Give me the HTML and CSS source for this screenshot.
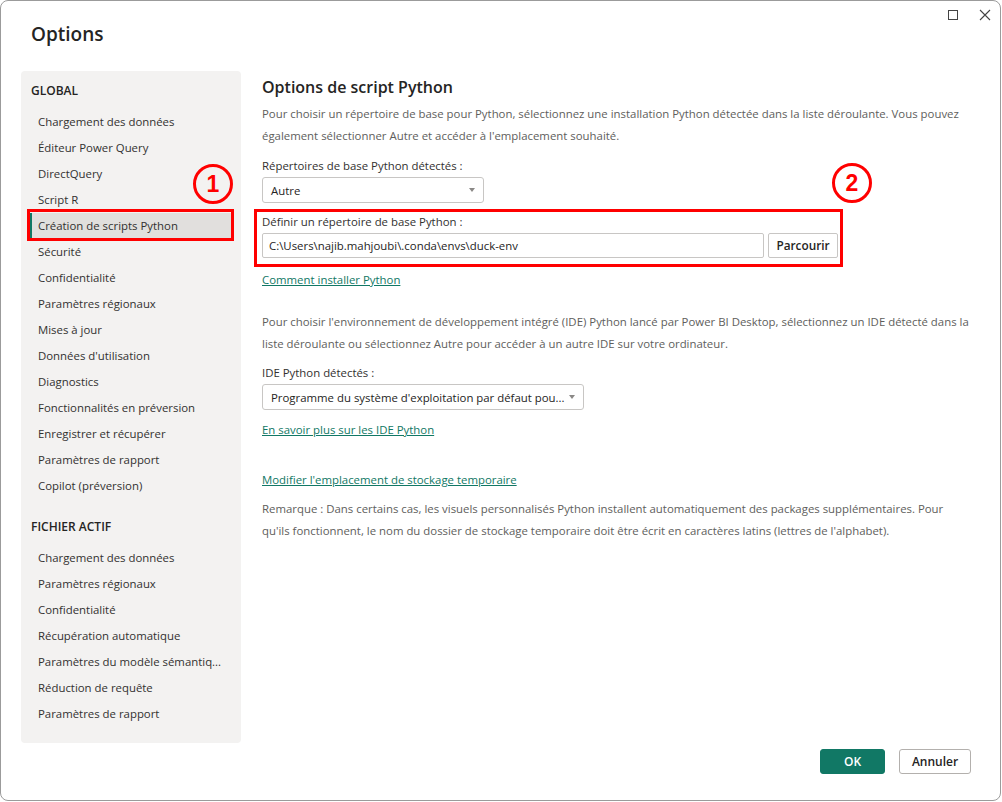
FILE: index.html
```html
<!DOCTYPE html>
<html lang="fr">
<head>
<meta charset="utf-8">
<title>Options</title>
<link rel="stylesheet" href="styles.css">
</head>
<body>
<div class="window">
  <header class="header">
    <h1 class="title">Options</h1>
    <div class="controls">
      <svg class="ctl" width="12" height="12" viewBox="0 0 12 12"><rect x="1.5" y="1.5" width="9" height="9" fill="none" stroke="#444" stroke-width="1"/></svg>
      <svg class="ctl" width="12" height="12" viewBox="0 0 12 12"><path d="M1 1 L11 11 M11 1 L1 11" stroke="#444" stroke-width="1.1" fill="none"/></svg>
    </div>
  </header>

  <div class="main">
    <nav class="sidebar">
      <div class="sec-title">GLOBAL</div>
      <ul class="nav">
        <li class="item">Chargement des données</li>
        <li class="item">Éditeur Power Query</li>
        <li class="item">DirectQuery</li>
        <li class="item">Script R</li>
        <li class="item selected">Création de scripts Python</li>
        <li class="item">Sécurité</li>
        <li class="item">Confidentialité</li>
        <li class="item">Paramètres régionaux</li>
        <li class="item">Mises à jour</li>
        <li class="item">Données d'utilisation</li>
        <li class="item">Diagnostics</li>
        <li class="item">Fonctionnalités en préversion</li>
        <li class="item">Enregistrer et récupérer</li>
        <li class="item">Paramètres de rapport</li>
        <li class="item">Copilot (préversion)</li>
      </ul>
      <div class="sec-title sec-second">FICHIER ACTIF</div>
      <ul class="nav">
        <li class="item">Chargement des données</li>
        <li class="item">Paramètres régionaux</li>
        <li class="item">Confidentialité</li>
        <li class="item">Récupération automatique</li>
        <li class="item">Paramètres du modèle sémantiq...</li>
        <li class="item">Réduction de requête</li>
        <li class="item">Paramètres de rapport</li>
      </ul>
    </nav>

    <section class="content">
      <h2 class="heading">Options de script Python</h2>
      <p class="para p1">Pour choisir un répertoire de base pour Python, sélectionnez une installation Python détectée dans la liste déroulante. Vous pouvez également sélectionner Autre et accéder à l'emplacement souhaité.</p>
      <div class="label l1">Répertoires de base Python détectés :</div>
      <div class="select s1"><span>Autre</span><span class="caret"></span></div>

      <div class="highlight">
        <div class="label">Définir un répertoire de base Python :</div>
        <div class="path-row">
          <div class="input">C:\Users\najib.mahjoubi\.conda\envs\duck-env</div>
          <div class="btn-browse">Parcourir</div>
        </div>
      </div>
      <a class="link lk1" href="#">Comment installer Python</a>

      <p class="para p2">Pour choisir l'environnement de développement intégré (IDE) Python lancé par Power BI Desktop, sélectionnez un IDE détecté dans la liste déroulante ou sélectionnez Autre pour accéder à un autre IDE sur votre ordinateur.</p>
      <div class="label l2">IDE Python détectés :</div>
      <div class="select s2"><span>Programme du système d'exploitation par défaut pou...</span><span class="caret"></span></div>
      <a class="link lk2" href="#">En savoir plus sur les IDE Python</a>
      <a class="link lk3" href="#">Modifier l'emplacement de stockage temporaire</a>
      <p class="para p3">Remarque : Dans certains cas, les visuels personnalisés Python installent automatiquement des packages supplémentaires. Pour qu'ils fonctionnent, le nom du dossier de stockage temporaire doit être écrit en caractères latins (lettres de l'alphabet).</p>
    </section>
  </div>

  <footer class="footer">
    <button class="btn btn-ok">OK</button>
    <button class="btn btn-cancel">Annuler</button>
  </footer>

  <div class="badge badge1">1</div>
  <div class="badge badge2">2</div>
</div>
</body>
</html>
```

FILE: styles.css
```css
* { box-sizing: border-box; }
html, body { margin: 0; padding: 0; background: #ffffff; }
body {
  font-family: "Open Sans", "Noto Sans", sans-serif;
  color: #252423;
  font-size: 11.4px;
}
.window {
  position: relative;
  width: 1001px;
  height: 801px;
  border: 1px solid #9b9b9b;
  border-radius: 8px;
  background: #fff;
  display: flex;
  flex-direction: column;
  overflow: hidden;
}
.header {
  height: 70px;
  display: flex;
  justify-content: space-between;
  align-items: flex-start;
  flex: none;
}
.title {
  margin: 0;
  padding: 19px 0 0 30px;
  font-size: 19px;
  line-height: 28px;
  font-weight: 600;
  color: #252423;
}
.controls {
  display: flex;
  gap: 20px;
  padding: 8px 9px 0 0;
}
.ctl { display: block; }

.main {
  height: 672px;
  display: flex;
  padding: 0 20px;
  flex: none;
}
.sidebar {
  width: 220px;
  flex: none;
  background: #f3f2f1;
  border-radius: 4px;
  padding: 10px 0 0 0;
}
.sec-title {
  padding-left: 10px;
  font-size: 12px;
  line-height: 20px;
  font-weight: 600;
  color: #252423;
}
.sec-second { margin-top: 18px; }
.nav {
  list-style: none;
  margin: 8px 0 0 0;
  padding: 0;
}
.item {
  position: relative;
  margin: 0 8px;
  padding-left: 9px;
  height: 26px;
  line-height: 26px;
  font-size: 11.4px;
  color: #323130;
  white-space: nowrap;
}
.item.selected {
  background: #e1dfdd;
  border-left: 3px solid #117865;
  padding-left: 6px;
}
.item.selected::after {
  content: "";
  position: absolute;
  left: -5px;
  right: -1px;
  top: -4px;
  bottom: -2px;
  border: 3px solid #ff0000;
}

.content {
  flex: 1;
  margin-left: 21px;
  padding-top: 4px;
  display: flex;
  flex-direction: column;
  align-items: flex-start;
}
.heading {
  margin: 0;
  font-size: 16px;
  line-height: 24px;
  font-weight: 600;
  color: #252423;
}
.para {
  margin: 0;
  font-size: 11.4px;
  line-height: 22px;
  color: #605e5c;
  max-width: 710px;
}
.p1 { margin-top: 4px; }
.p2 { margin-top: 21px; }
.p3 { margin-top: 8px; }
.label {
  font-size: 11.4px;
  line-height: 20px;
  color: #323130;
}
.l1 { margin-top: 9px; }
.l2 { margin-top: 8px; }
.select {
  margin-top: 1px;
  height: 26px;
  border: 1px solid #c8c6c4;
  border-radius: 3px;
  display: flex;
  align-items: center;
  justify-content: space-between;
  padding: 0 8px 0 8px;
  font-size: 11.4px;
  color: #252423;
  white-space: nowrap;
}
.s1 { width: 222px; }
.s2 { width: 322px; }
.caret {
  flex: none;
  width: 0;
  height: 0;
  border-left: 3.5px solid transparent;
  border-right: 3.5px solid transparent;
  border-top: 4px solid #8a8886;
}
.highlight {
  margin-top: 6px;
  margin-left: -8px;
  border: 3px solid #ff0000;
  padding: 0 2px 6px 5px;
}
.path-row {
  display: flex;
  gap: 4px;
  margin-top: 1px;
}
.input {
  width: 502px;
  height: 25px;
  border: 1px solid #c8c6c4;
  border-radius: 2px;
  padding: 0 6px;
  line-height: 23px;
  font-size: 11.4px;
  color: #252423;
}
.btn-browse {
  width: 70px;
  height: 25px;
  border: 1px solid #c8c6c4;
  border-radius: 2px;
  line-height: 23px;
  text-align: center;
  font-size: 11.8px;
  font-weight: 600;
  color: #252423;
}
.link {
  font-size: 11.4px;
  line-height: 20px;
  color: #117865;
  text-decoration: underline;
}
.lk1 { margin-top: 3px; }
.lk2 { margin-top: 10px; }
.lk3 { margin-top: 30px; }

.footer {
  flex: none;
  display: flex;
  justify-content: flex-end;
  gap: 14px;
  padding: 6px 29px 0 0;
}
.btn {
  height: 25px;
  border-radius: 3px;
  font-family: "Open Sans", "Noto Sans", sans-serif;
  font-size: 12px;
  font-weight: 600;
  padding: 0;
  cursor: pointer;
}
.btn-ok {
  width: 65px;
  background: #117865;
  border: 1px solid #117865;
  color: #fff;
}
.btn-cancel {
  width: 72px;
  background: #fff;
  border: 1px solid #b3b0ad;
  color: #252423;
}

.badge {
  position: absolute;
  width: 40px;
  height: 40px;
  border: 3px solid #ff0000;
  border-radius: 50%;
  color: #ff0000;
  font-family: "Liberation Sans", Arial, sans-serif;
  font-weight: 700;
  font-size: 23px;
  line-height: 34px;
  text-align: center;
}
.badge1 { left: 192px; top: 163px; }
.badge2 { left: 831px; top: 162px; }
```
